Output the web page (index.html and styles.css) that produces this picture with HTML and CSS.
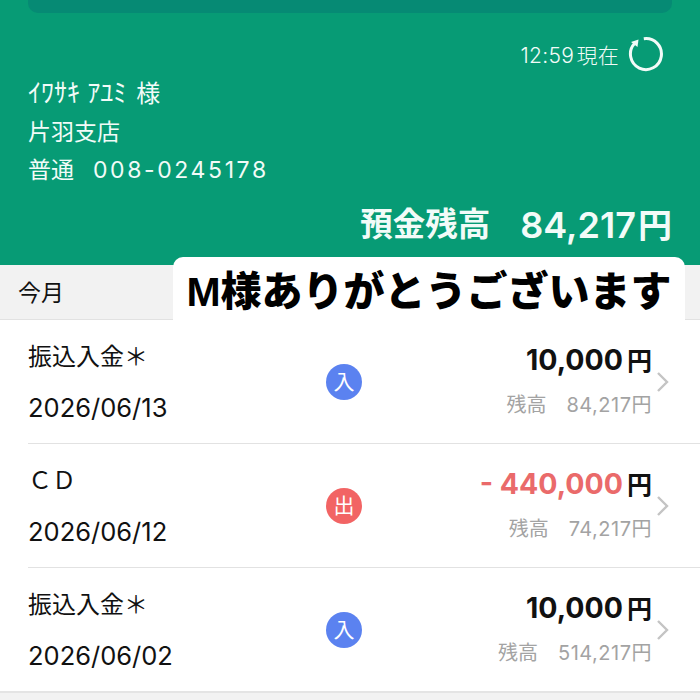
FILE: index.html
```html
<!DOCTYPE html>
<html lang="ja">
<head>
    <meta charset="UTF-8">
    <title>入出金明細</title>
    <link rel="stylesheet" href="styles.css">
</head>
<body>

<header class="account">
    <div class="top-band"></div>
    <div class="updated">
        <span class="updated-text">12:59 現在</span>
        <svg class="reload" width="36" height="36" viewBox="0 0 36 36">
            <path d="M15.8 2.7 A15.5 15.5 0 1 1 6.5 7.6" fill="none" stroke="#f2fbf8" stroke-width="3"/>
            <path d="M10.5 3.5 L3 6 L9.5 11 Z" fill="#f2fbf8"/>
        </svg>
    </div>
    <div class="holder">
        <p class="name"><span class="kana">ｲﾜｻｷ ｱﾕﾐ</span><span class="sama">様</span></p>
        <p>片羽支店</p>
        <p class="number">普通<span class="digits">008-0245178</span></p>
    </div>
    <div class="balance">
        <span>預金残高</span>
        <span class="balance-value">84,217<span class="balance-yen">円</span></span>
    </div>
</header>

<div class="month">今月</div>
<div class="caption">M様ありがとうございます</div>

<ul class="list">
    <li class="row">
        <div class="row-left">
            <div>振込入金＊</div>
            <div class="date">2026/06/13</div>
        </div>
        <div class="badge in">入</div>
        <div class="row-right">
            <div class="amount">10,000<span class="yen">円</span></div>
            <div class="rest"><span>残高</span><span class="rest-value">84,217円</span></div>
        </div>
        <svg class="chevron" width="14" height="24" viewBox="0 0 14 24"><path d="M2 3 L11 12 L2 21" fill="none" stroke="#c4c4c4" stroke-width="2.4"/></svg>
    </li>
    <li class="row">
        <div class="row-left">
            <div>ＣＤ</div>
            <div class="date">2026/06/12</div>
        </div>
        <div class="badge out">出</div>
        <div class="row-right">
            <div class="amount"><span class="minus">- 440,000</span><span class="yen">円</span></div>
            <div class="rest"><span>残高</span><span class="rest-value">74,217円</span></div>
        </div>
        <svg class="chevron" width="14" height="24" viewBox="0 0 14 24"><path d="M2 3 L11 12 L2 21" fill="none" stroke="#c4c4c4" stroke-width="2.4"/></svg>
    </li>
    <li class="row">
        <div class="row-left">
            <div>振込入金＊</div>
            <div class="date">2026/06/02</div>
        </div>
        <div class="badge in">入</div>
        <div class="row-right">
            <div class="amount">10,000<span class="yen">円</span></div>
            <div class="rest"><span>残高</span><span class="rest-value">514,217円</span></div>
        </div>
        <svg class="chevron" width="14" height="24" viewBox="0 0 14 24"><path d="M2 3 L11 12 L2 21" fill="none" stroke="#c4c4c4" stroke-width="2.4"/></svg>
    </li>
</ul>

</body>
</html>
```

FILE: styles.css
```css
* {
    box-sizing: border-box;
}
html, body {
    height: 700px;
    overflow: hidden;
}
body {
    margin: 0;
    position: relative;
    background: #f2f2f2;
    color: #111;
    font-family: Inter, "Noto Sans CJK JP", sans-serif;
}
p {
    margin: 0;
}
.account {
    height: 265px;
    padding: 0 28px;
    background: #079b75;
    color: #f2fbf8;
}
.top-band {
    height: 13px;
    background: #068a74;
    border-radius: 0 0 10px 10px;
}
.updated {
    display: flex;
    justify-content: flex-end;
    align-items: center;
    gap: 9px;
    height: 36px;
    margin-top: 23px;
    margin-right: 8px;
    font-size: 21px;
}
.updated-text {
    font-weight: 300;
    letter-spacing: 0.3px;
    word-spacing: -4px;
}
.holder {
    margin-top: 2px;
    font-size: 23px;
    line-height: 38px;
}
.holder .name {
    font-size: 24px;
}
.holder .kana {
    font-size: 26px;
}
.holder .sama {
    margin-left: 10px;
}
.number .digits {
    margin-left: 19px;
    letter-spacing: 2.6px;
}
.balance {
    display: flex;
    justify-content: flex-end;
    gap: 30px;
    margin-top: 13px;
    font-size: 32.5px;
    line-height: 46px;
    font-weight: 600;
}
.balance-value {
    font-size: 36px;
}
.balance-yen {
    margin-left: 2px;
    font-size: 34px;
}
.month {
    height: 55px;
    padding: 0 18px;
    font-size: 23px;
    line-height: 56px;
    border-bottom: 1px solid #e2e2e2;
}
.caption {
    position: absolute;
    left: 173px;
    top: 257px;
    width: 512px;
    height: 63px;
    padding-top: 6px;
    background: #fff;
    border-radius: 10px 10px 0 0;
    color: #000;
    font-family: "Liberation Sans", "Noto Sans CJK JP", sans-serif;
    font-size: 41px;
    line-height: 58px;
    font-weight: 900;
    text-align: center;
    white-space: nowrap;
}
.list {
    list-style: none;
    margin: 0;
    padding: 0;
    background: #fff;
    border-bottom: 2px solid #e4e4e4;
}
.row {
    display: flex;
    align-items: center;
    height: 124px;
    margin-left: 28px;
    border-bottom: 1px solid #e2e2e2;
}
.row:last-child {
    height: 123px;
    border-bottom: none;
}
.row-left {
    display: flex;
    flex-direction: column;
    gap: 16px;
    width: 298px;
    margin-top: 2px;
    font-size: 24px;
    line-height: 34px;
}
.date {
    font-size: 25.5px;
    margin-top: 1px;
}
.badge {
    width: 36px;
    height: 36px;
    border-radius: 50%;
    color: #fff;
    font-size: 21px;
    line-height: 36px;
    text-align: center;
}
.badge.in {
    background: #5b82f0;
}
.badge.out {
    background: #f26464;
}
.row-right {
    flex: 1;
    display: flex;
    flex-direction: column;
    align-items: flex-end;
    gap: 13px;
    margin-top: -4px;
}
.amount {
    font-size: 28.5px;
    line-height: 36px;
    font-weight: 700;
}
.yen {
    margin-left: 4px;
    font-size: 25px;
    font-weight: 700;
}
.minus {
    color: #ea6a6a;
}
.rest {
    display: flex;
    gap: 20px;
    color: #a3a3a3;
    font-size: 20px;
    line-height: 26px;
}
.rest-value {
    letter-spacing: 0.5px;
}
.chevron {
    margin: 0 30px 0 4px;
    flex-shrink: 0;
}
```
